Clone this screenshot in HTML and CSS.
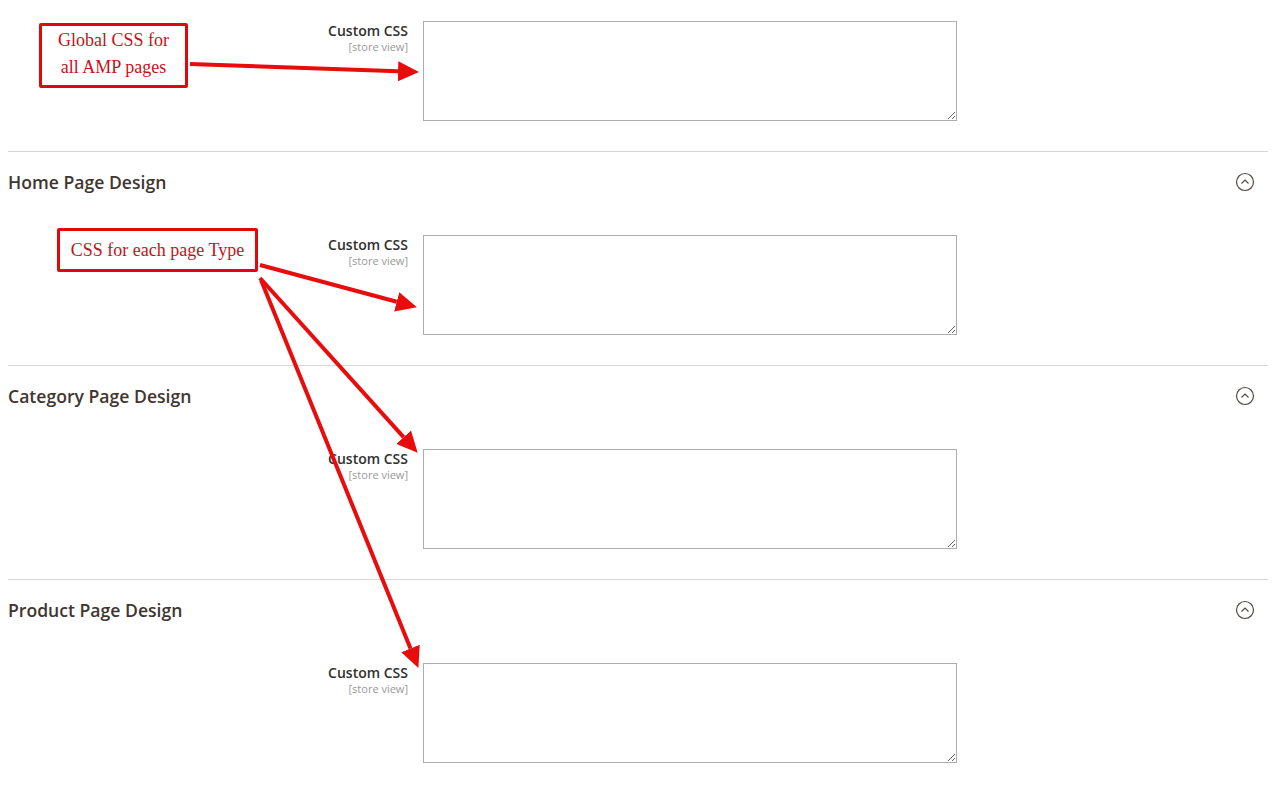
FILE: index.html
```html
<!DOCTYPE html>
<html lang="en">
<head>
    <meta charset="UTF-8">
    <title>AMP Design Settings</title>
    <link rel="stylesheet" href="styles.css">
</head>
<body>
    <div class="page">

        <div class="field">
            <label class="label">Custom CSS <span class="scope">[store view]</span></label>
            <textarea class="control"></textarea>
        </div>

        <div class="section">
            <div class="section-head">
                <span class="section-title">Home Page Design</span>
                <svg class="toggle" width="20" height="20" viewBox="0 0 20 20"><circle cx="10" cy="10" r="8.5"/><path d="M6.5 11.5 L10 8 L13.5 11.5"/></svg>
            </div>
            <div class="field">
                <label class="label">Custom CSS <span class="scope">[store view]</span></label>
                <textarea class="control"></textarea>
            </div>
        </div>

        <div class="section">
            <div class="section-head">
                <span class="section-title">Category Page Design</span>
                <svg class="toggle" width="20" height="20" viewBox="0 0 20 20"><circle cx="10" cy="10" r="8.5"/><path d="M6.5 11.5 L10 8 L13.5 11.5"/></svg>
            </div>
            <div class="field">
                <label class="label">Custom CSS <span class="scope">[store view]</span></label>
                <textarea class="control"></textarea>
            </div>
        </div>

        <div class="section">
            <div class="section-head">
                <span class="section-title">Product Page Design</span>
                <svg class="toggle" width="20" height="20" viewBox="0 0 20 20"><circle cx="10" cy="10" r="8.5"/><path d="M6.5 11.5 L10 8 L13.5 11.5"/></svg>
            </div>
            <div class="field">
                <label class="label">Custom CSS <span class="scope">[store view]</span></label>
                <textarea class="control"></textarea>
            </div>
        </div>

    </div>

    <!-- annotations drawn over the screenshot -->
    <div class="note note-global">Global CSS for<br>all AMP pages</div>
    <div class="note note-type">CSS for each page Type</div>

    <svg class="arrows" width="1283" height="790">
        <defs>
            <marker id="head" markerUnits="userSpaceOnUse" markerWidth="22" markerHeight="20" refX="0" refY="10" orient="auto">
                <path d="M0 0 L21 10 L0 20 Z" fill="#e80c0c"/>
            </marker>
        </defs>
        <line x1="190" y1="64" x2="398" y2="71.3" marker-end="url(#head)"/>
        <line x1="260" y1="265" x2="396.7" y2="301.8" marker-end="url(#head)"/>
        <line x1="260" y1="278" x2="403.6" y2="437.2" marker-end="url(#head)"/>
        <line x1="261" y1="280" x2="410.5" y2="648.5" marker-end="url(#head)"/>
    </svg>
</body>
</html>
```

FILE: styles.css
```css
        body {
            margin: 0;
            background: #fff;
            font-family: "Open Sans", sans-serif;
            color: #303030;
        }

        .page {
            width: 1260px;
            margin-left: 8px;
            padding-top: 21px;
        }

        .field {
            display: grid;
            grid-template-columns: 400px 534px;
            column-gap: 15px;
        }

        .label {
            text-align: right;
            font-size: 14px;
            font-weight: 600;
            line-height: 19px;
            color: #303030;
        }

        .scope {
            display: block;
            font-size: 11px;
            font-weight: 400;
            line-height: 13px;
            color: #999;
        }

        .control {
            box-sizing: border-box;
            width: 534px;
            height: 100px;
            border: 1px solid #adadad;
            margin: 0;
            display: block;
            font-family: "Open Sans", sans-serif;
        }

        .section {
            margin-top: 30px;
            border-top: 1px solid #d6d6d6;
        }

        .section-head {
            display: flex;
            justify-content: space-between;
            align-items: center;
            padding-top: 19px;
            margin-bottom: 42px;
            height: 22px;
        }

        .section-title {
            font-size: 17.6px;
            font-weight: 600;
            color: #41362f;
        }

        .toggle {
            margin-right: 13px;
            fill: none;
            stroke: #514943;
            stroke-width: 1.2;
        }

        .note {
            position: absolute;
            border: 3px solid #e3070b;
            border-radius: 2px;
            background: #fff;
            color: #c4121a;
            font-family: "Liberation Serif", serif;
            font-size: 18px;
            text-align: center;
        }

        .note-global {
            left: 39px;
            top: 23px;
            width: 143px;
            height: 58px;
            line-height: 27px;
            padding-top: 1px;
        }

        .note-type {
            left: 57px;
            top: 228px;
            width: 195px;
            height: 38px;
            line-height: 38px;
        }

        .arrows {
            position: absolute;
            left: 0;
            top: 0;
            pointer-events: none;
        }

        .arrows line {
            stroke: #e80c0c;
            stroke-width: 4;
        }
```
